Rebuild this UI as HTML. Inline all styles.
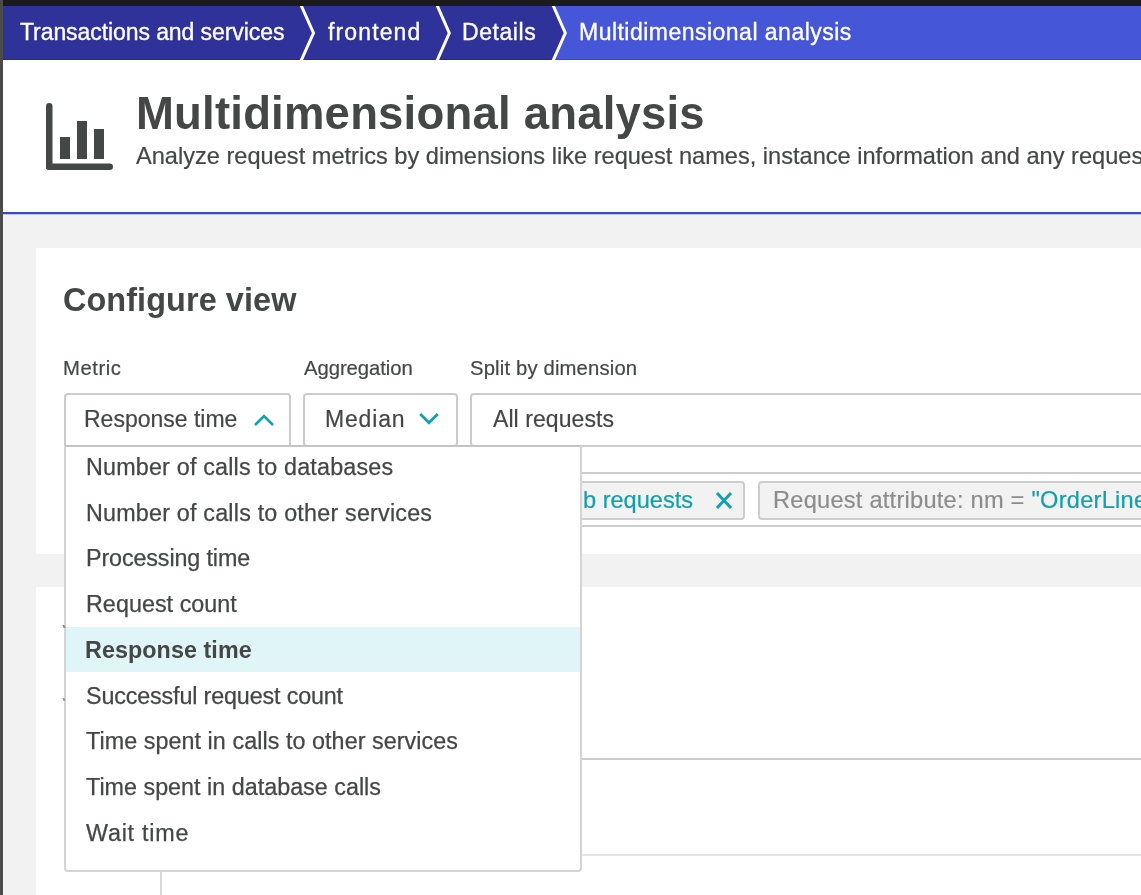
<!DOCTYPE html>
<html>
<head>
<meta charset="utf-8">
<style>
html,body{margin:0;padding:0;}
.abs,.item,.t{will-change:transform;}
body{width:1141px;height:895px;overflow:hidden;position:relative;background:#f2f2f2;font-family:"Liberation Sans",sans-serif;color:#454646;}
.abs{position:absolute;white-space:nowrap;line-height:1;}
#topbar{position:absolute;left:0;top:0;width:1141px;height:6px;background:#1b1b1b;}
#leftbar{position:absolute;left:0;top:0;width:3px;height:895px;background:#4b4b4b;z-index:50;}
#bc{position:absolute;left:3px;top:6px;width:1138px;height:54px;background:#2f3399;overflow:hidden;}
#bc .t{position:absolute;top:14.5px;font-size:23px;line-height:1;color:#fff;white-space:nowrap;-webkit-text-stroke:0.35px #fff;}
#bc svg{position:absolute;left:0;top:0;}
#header{position:absolute;left:3px;top:60px;width:1138px;height:152px;background:#fff;}
#hline{position:absolute;left:3px;top:212px;width:1138px;height:2px;background:#3449d2;box-shadow:0 1px 0 rgba(52,73,210,0.25);}
.card{position:absolute;left:36px;width:1105px;background:#fff;}
.sel{position:absolute;top:393.3px;height:53.7px;box-sizing:border-box;border:2px solid #cbcbcb;border-radius:4px;background:#fff;}
.dd{position:absolute;left:64px;top:445px;width:518px;height:427px;box-sizing:border-box;border:2px solid #d4d4d4;border-top-color:#c4c4c4;border-radius:0 0 4px 4px;background:#fff;z-index:10;}
.item{position:absolute;left:22px;font-size:23.3px;line-height:1;white-space:nowrap;-webkit-text-stroke:0.25px #454646;}
.chip{position:absolute;top:481px;height:39px;box-sizing:border-box;border:2px solid #cdcdcd;border-radius:4px;background:#f2f2f2;}
</style>
</head>
<body>
<div id="topbar"></div>
<div id="leftbar"></div>

<div id="bc">
    <svg width="1138" height="54">
    <polygon points="550,0 562.3,27 550,54 1138,54 1138,0" fill="#4556d6"/>
    <rect x="0" y="53" width="1138" height="1" fill="rgba(10,10,120,0.22)"/>
    <polyline points="297.5,-2 310.5,27 297.5,56" fill="none" stroke="#fff" stroke-width="3"/>
    <polyline points="433.5,-2 446.3,27 433.5,56" fill="none" stroke="#fff" stroke-width="3"/>
    <polyline points="549.5,-2 562.3,27 549.5,56" fill="none" stroke="#fff" stroke-width="3"/>
  </svg>
  <div class="t" style="left:16.54px;letter-spacing:-0.08px">Transactions and services</div>
  <div class="t" style="left:325.27px;letter-spacing:1.13px">frontend</div>
  <div class="t" style="left:459.16px;letter-spacing:0.56px">Details</div>
  <div class="t" style="left:575.66px;letter-spacing:0.48px">Multidimensional analysis</div>
</div>

<div id="header">
  <svg style="position:absolute;left:40px;top:40px" width="76" height="72">
    <rect x="3" y="3" width="6.5" height="67" rx="3.2" fill="#454646"/>
    <rect x="3" y="63.5" width="67" height="6.5" rx="3.2" fill="#454646"/>
    <rect x="17" y="37" width="10" height="22" fill="#454646"/>
    <rect x="34" y="21" width="10" height="38" fill="#454646"/>
    <rect x="51" y="29" width="10" height="30" fill="#454646"/>
  </svg>
  <div class="abs" style="left:133.22px;top:31.3px;font-size:45.5px;font-weight:bold;letter-spacing:0.2px;">Multidimensional analysis</div>
  <div class="abs" style="left:133px;top:85.1px;font-size:23.6px;-webkit-text-stroke:0.2px #454646;">Analyze request metrics by dimensions like request names, instance information and any request attributes</div>
</div>
<div id="hline"></div>

<div class="card" style="top:248px;height:306px;"></div>
<div class="abs" style="left:62.5px;top:284px;font-size:32.4px;font-weight:bold;letter-spacing:0.09px;">Configure view</div>
<div class="abs" style="left:62.68px;top:358.4px;font-size:20.3px;letter-spacing:0.56px;-webkit-text-stroke:0.2px #454646;">Metric</div>
<div class="abs" style="left:304px;top:358.4px;font-size:20.3px;letter-spacing:-0.07px;-webkit-text-stroke:0.2px #454646;">Aggregation</div>
<div class="abs" style="left:469.88px;top:358.4px;font-size:20.3px;letter-spacing:0.15px;-webkit-text-stroke:0.2px #454646;">Split by dimension</div>

<div class="sel" style="left:64px;width:227px;border-radius:4px 4px 0 0;"></div>
<div class="sel" style="left:303px;width:154.5px;"></div>
<div class="sel" style="left:470px;width:700px;"></div>
<div class="abs" style="left:84.46px;top:408.15px;font-size:23px;-webkit-text-stroke:0.2px #454646;">Response time</div>
<svg style="position:absolute;left:252px;top:412px" width="24" height="16"><polyline points="3,13 12,4 21,13" fill="none" stroke="#12a0ad" stroke-width="2.6"/></svg>
<div class="abs" style="left:325.26px;top:408.15px;font-size:23px;letter-spacing:0.82px;-webkit-text-stroke:0.2px #454646;">Median</div>
<svg style="position:absolute;left:418px;top:411px" width="24" height="16"><polyline points="2.2,3 11,11.8 19.8,3" fill="none" stroke="#12a0ad" stroke-width="2.8"/></svg>
<div class="abs" style="left:492.8px;top:408.15px;font-size:23px;letter-spacing:0.07px;-webkit-text-stroke:0.2px #454646;">All requests</div>

<!-- filter box -->
<div style="position:absolute;left:470px;top:472px;width:700px;height:55px;box-sizing:border-box;border-top:2px solid #cdcdcd;border-bottom:2px solid #cdcdcd;"></div>
<div class="chip" style="left:470px;width:275px;"></div>
<div class="abs" style="left:548.2px;top:489px;font-size:23.6px;color:#12a0ad;-webkit-text-stroke:0.2px #12a0ad;">Web requests</div>
<svg style="position:absolute;left:714px;top:490px" width="20" height="21"><path d="M3,3 L17,18 M17,3 L3,18" stroke="#12a0ad" stroke-width="3"/></svg>
<div class="chip" style="left:758px;width:500px;"></div>
<div class="abs" style="left:772.61px;top:489px;font-size:23.6px;color:#8c8c8c;letter-spacing:0.25px;-webkit-text-stroke:0.2px #8c8c8c;">Request attribute: nm = <span style="color:#12a0ad;-webkit-text-stroke:0.2px #12a0ad">"OrderLineItem"</span></div>

<div class="card" style="top:587px;height:320px;"></div>
<div style="position:absolute;left:160px;top:758px;width:981px;height:2px;background:#cccccc;"></div>
<div style="position:absolute;left:160px;top:854px;width:981px;height:2px;background:#e4e4e4;"></div>
<div style="position:absolute;left:160px;top:856px;width:2px;height:40px;background:#d9d9d9;"></div>

<div class="dd">
  <div class="item" style="top:8.90px;left:19.6px;letter-spacing:0.2px">Number of calls to databases</div>
  <div class="item" style="top:54.65px;left:19.6px;letter-spacing:0.21px">Number of calls to other services</div>
  <div class="item" style="top:100.40px;left:19.6px;letter-spacing:-0.11px">Processing time</div>
  <div class="item" style="top:146.15px;left:19.6px;letter-spacing:0.05px">Request count</div>
  <div style="position:absolute;left:0;top:179.7px;width:100%;height:45px;background:#e0f5f7;"></div>
  <div class="item" style="top:191.90px;left:19.07px;font-weight:bold;letter-spacing:0.08px;-webkit-text-stroke:0">Response time</div>
  <div class="item" style="top:237.65px;left:19.53px;letter-spacing:-0.14px">Successful request count</div>
  <div class="item" style="top:283.40px;left:20.23px;letter-spacing:0.07px">Time spent in calls to other services</div>
  <div class="item" style="top:329.15px;left:20.23px;letter-spacing:0.02px">Time spent in database calls</div>
  <div class="item" style="top:374.90px;left:20.47px;letter-spacing:0.78px">Wait time</div>
</div>
<div style="position:absolute;left:62.5px;top:625px;width:2px;height:3px;background:#8a8a8a;z-index:20;transform:skewX(20deg)"></div>
<div style="position:absolute;left:62.5px;top:698px;width:2px;height:3px;background:#9a9a9a;z-index:20;transform:skewX(20deg)"></div>
</body>
</html>
